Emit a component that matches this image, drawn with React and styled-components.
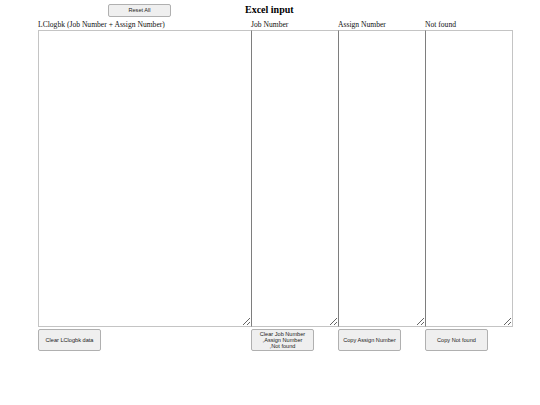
import React from 'react'
import styled, { createGlobalStyle } from 'styled-components'

const GlobalStyle = createGlobalStyle`
body {
    margin: 0;
    background: #ffffff;
    font-family: "Liberation Serif", "Times New Roman", serif;
}
`

const columns = [
    { label: 'LClogbk (Job Number + Assign Number)', button: ['Clear LClogbk data'] },
    { label: 'Job Number', button: ['Clear Job Number', ',Assign Number', ',Not found'] },
    { label: 'Assign Number', button: ['Copy Assign Number'] },
    { label: 'Not found', button: ['Copy Not found'] }
]

export default function App() {
    return (
        <Page>
            <GlobalStyle />
            <Header>
                <Button small>Reset All</Button>
                <Title>Excel input</Title>
            </Header>
            <Grid>
                {columns.map((col, idx) => (
                    <Column key={col.label}>
                        <Label>{col.label}</Label>
                        <Area joined={idx > 0} />
                        <Button>
                            {col.button.map((line, i) => <Line key={i}>{line}</Line>)}
                        </Button>
                    </Column>
                ))}
            </Grid>
        </Page>
    )
}

const Page = styled.div`
padding: 0 0 0 38px;
`

const Header = styled.div`
display: flex;
align-items: center;
height: 20px;
padding-left: 70px;
`

const Title = styled.h1`
margin: 0 0 0 74px;
font-size: 10px;
font-weight: bold;
line-height: 12px;
color: #000;
`

const Grid = styled.div`
display: grid;
grid-template-columns: 213px 87px 87px 87px;
`

const Column = styled.div`
display: flex;
flex-direction: column;
align-items: flex-start;
`

const Label = styled.div`
font-size: 7.6px;
line-height: 10px;
color: #111;
white-space: nowrap;
`

const Area = styled.textarea`
display: block;
box-sizing: border-box;
width: calc(100% + 1px);
height: 297px;
margin: 0 0 2px 0;
border: 1px solid #c4c4c4;
border-left-color: ${p => (p.joined ? '#7e7e7e' : '#c4c4c4')};
background: #fff;
`

const Button = styled.button`
box-sizing: border-box;
width: 63px;
height: ${p => (p.small ? '13px' : '22px')};
padding: 0;
display: flex;
flex-direction: column;
align-items: center;
justify-content: center;
background: #efefef;
border: 1px solid #b0b0b0;
border-radius: 2px;
font-family: "Liberation Sans", Arial, sans-serif;
font-size: 5.6px;
line-height: 6px;
color: #222;
`

const Line = styled.span`
display: block;
white-space: nowrap;
`
